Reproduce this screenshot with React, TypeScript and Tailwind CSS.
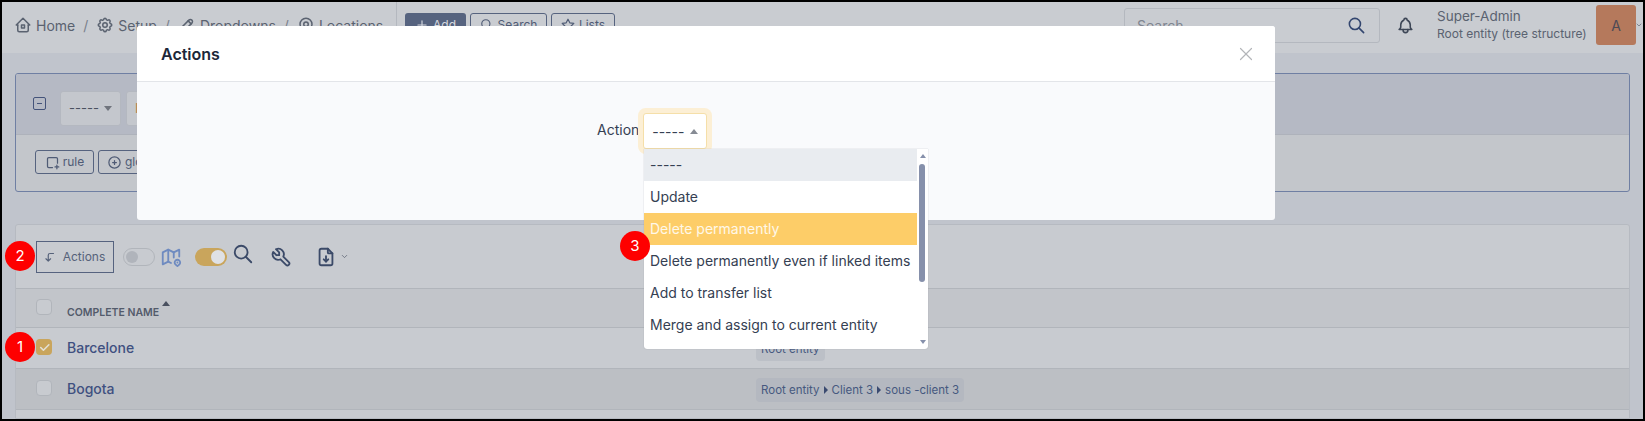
import {
  TbHome2,
  TbSettings,
  TbPencil,
  TbMapPin,
  TbPlus,
  TbSearch,
  TbStar,
  TbBell,
  TbX,
  TbTool,
  TbFileDownload,
  TbMap2,
  TbCornerLeftDown,
  TbCirclePlus,
  TbChevronDown,
  TbCheck,
} from "react-icons/tb";

const crumbs = [
  { icon: TbHome2, label: "Home" },
  { icon: TbSettings, label: "Setup" },
  { icon: TbPencil, label: "Dropdowns" },
  { icon: TbMapPin, label: "Locations" },
];

const options = [
  "-----",
  "Update",
  "Delete permanently",
  "Delete permanently even if linked items",
  "Add to transfer list",
  "Merge and assign to current entity",
];

function Marker({ n, className }: { n: number; className: string }) {
  return (
    <div className={`absolute flex h-[30px] w-[30px] items-center justify-center rounded-full bg-[#fe0000] text-[15px] text-white ${className}`}>
      {n}
    </div>
  );
}

function Header() {
  return (
    <header className="flex h-[51px] shrink-0 items-center bg-[#c9ccd1] text-[#5a6270]">
      <nav className="flex w-[394px] items-center pb-[5px] pl-[12px] text-[14px]">
        {crumbs.map((c, i) => {
          const Icon = c.icon;
          return (
            <div key={c.label} className="flex items-center">
              {i > 0 && <span className="mx-[8px] text-[#7a808b]">/</span>}
              <Icon size={18} className="mr-[4px]" />
              <span>{c.label}</span>
            </div>
          );
        })}
      </nav>
      <div className="h-full w-px bg-[#b4b8bf]" />
      <div className="ml-[8px] flex items-center gap-[4px] pb-[5px] text-[12px]">
        <button className="flex h-[24px] w-[61px] items-center justify-center gap-1 rounded-[3px] bg-[#56637f] text-[#d5d8de]">
          <TbPlus size={14} /> Add
        </button>
        <button className="flex h-[24px] w-[77px] items-center justify-center gap-1 rounded-[3px] border border-[#56637f] text-[#4f5b75]">
          <TbSearch size={14} /> Search
        </button>
        <button className="flex h-[24px] w-[64px] items-center justify-center gap-1 rounded-[3px] border border-[#56637f] text-[#4f5b75]">
          <TbStar size={14} /> Lists
        </button>
      </div>
      <div className="mb-[5px] ml-auto flex items-center">
        <div className="flex h-[35px] w-[256px] items-center justify-between rounded-[3px] border border-[#b4b8bf] pl-[12px] pr-[13px] text-[14px] text-[#7f8590]">
          Search
          <TbSearch size={19} className="text-[#33466f]" />
        </div>
        <TbBell size={19} className="ml-[16px] text-[#3d4656]" />
        <div className="ml-[22px] w-[159px] leading-[17px]">
          <div className="text-[13.5px] text-[#5a6270]">Super-Admin</div>
          <div className="text-[12px] text-[#5a6270]">Root entity (tree structure)</div>
        </div>
        <div className="flex h-[40px] w-[40px] items-center justify-center rounded-[3px] bg-[#b5795c] text-[14px] text-[#4d4a55]">
          A
        </div>
        <TbChevronDown size={8} className="ml-[-1px] w-[8px] text-[#5a6270]" />
      </div>
    </header>
  );
}

function FilterCard() {
  return (
    <section className="mx-[13px] mt-[20px] h-[119px] overflow-hidden rounded-[3px] border border-[#6f7fa3] bg-[#c3c6cb]">
      <div className="flex h-[61px] items-start border-b border-[#aeb2bb] bg-[#b5b9c4] pl-[17px] pt-[17px]">
        <span className="mt-[6px] flex h-[13px] w-[13px] items-center justify-center rounded-[2px] border-[1.5px] border-[#44537a]">
          <span className="h-[1.5px] w-[5px] bg-[#44537a]" />
        </span>
        <div className="ml-[14px] flex h-[35px] w-[61px] items-center justify-center gap-[5px] rounded-[3px] border border-[#b4b8c0] bg-[#c4c7cd] text-[13px] text-[#4a5160]">
          -----
          <span className="h-0 w-0 border-x-[4px] border-t-[5px] border-x-transparent border-t-[#70747d]" />
        </div>
        <div className="ml-[5px] flex h-[35px] w-[100px] items-center rounded-[3px] border border-[#b4b8c0] bg-[#c4c7cd] pl-[8px] text-[13px] text-[#b5814e]">
          Items
        </div>
      </div>
      <div className="flex gap-[4px] pl-[19px] pt-[15px] text-[12px] text-[#4f5b75]">
        <button className="flex h-[24px] w-[59px] items-center justify-center gap-[3px] rounded-[3px] border border-[#56637f]">
          <svg width="15" height="15" viewBox="0 0 24 24" fill="none" stroke="currentColor" strokeWidth="2" strokeLinecap="round">
            <path d="M12 20H6a2 2 0 0 1-2-2V6a2 2 0 0 1 2-2h12a2 2 0 0 1 2 2v7" />
            <path d="M16 19h6M19 16v6" />
          </svg>
          rule
        </button>
        <button className="flex h-[24px] w-[80px] items-center gap-[3px] rounded-[3px] border border-[#56637f] pl-[8px]">
          <TbCirclePlus size={15} /> global
        </button>
      </div>
    </section>
  );
}

function ListCard() {
  return (
    <section className="mx-[13px] mt-[32px] flex-1 rounded-t-[3px] border border-[#b6bac1] bg-[#c8cbd0]">
      <div className="flex h-[64px] items-center border-b border-[#b1b5bb] pl-[20px]">
        <button className="flex h-[32px] w-[78px] items-center justify-center gap-[6px] border border-[#56637f] pr-[2px] text-[12px] text-[#56627a]">
          <TbCornerLeftDown size={14} /> Actions
        </button>
        <div className="ml-[9px] flex h-[18px] w-[32px] items-center rounded-full border border-[#b1b5bb] bg-[#c8cbd0] pl-[2px]">
          <span className="h-[12px] w-[12px] rounded-full bg-[#b0b4bb]" />
        </div>
        <TbMap2 size={22} className="ml-[5px] text-[#6f8bc0]" />
        <div className="ml-[13px] flex h-[18px] w-[32px] items-center justify-end rounded-full bg-[#c9a55c] pr-[2px]">
          <span className="h-[14px] w-[14px] rounded-full bg-[#dfe1e5]" />
        </div>
        <TbSearch size={22} className="ml-[5px] -translate-y-[3px] text-[#3b4a68]" />
        <TbTool size={22} className="ml-[16px] text-[#3b4a68]" />
        <TbFileDownload size={22} className="ml-[23px] text-[#3b4a68]" />
        <TbChevronDown size={9} className="ml-[3px] text-[#5a6270]" />
      </div>
      <div className="flex h-[39px] border-b border-[#b1b5bb] bg-[#c2c5ca] pl-[20px]">
        <span className="mt-[10px] h-[16px] w-[16px] rounded-[4px] border border-[#b1b5bb] bg-[#c8cbd0]" />
        <span className="ml-[15px] mt-[16px] text-[10.5px] font-semibold text-[#535b6b]">COMPLETE NAME</span>
        <span className="ml-[3px] mt-[12px] h-0 w-0 border-x-[4px] border-b-[5px] border-x-transparent border-b-[#4a5160]" />
      </div>
      <div className="flex h-[41px] items-center border-b border-[#b1b5bb] pb-[2px] pl-[20px]">
        <span className="flex h-[16px] w-[16px] items-center justify-center rounded-[4px] bg-[#c9a55c] text-[#e3e0d5]">
          <TbCheck size={13} strokeWidth={3} />
        </span>
        <span className="ml-[15px] w-[689px] text-[14px] font-medium text-[#3f5080]">Barcelone</span>
        <span className="mt-[3px] rounded-[4px] bg-[#bcc0c7] px-[5px] py-[4px] text-[11.5px] leading-[16px] text-[#46587f]">Root entity</span>
      </div>
      <div className="flex h-[41px] items-center border-b border-[#b1b5bb] bg-[#bcbfc4] pb-[2px] pl-[20px]">
        <span className="h-[16px] w-[16px] rounded-[4px] border border-[#b1b5bb] bg-[#c8cbd0]" />
        <span className="ml-[15px] w-[689px] text-[14px] font-medium text-[#3f5080]">Bogota</span>
        <span className="mt-[3px] flex items-center gap-[4px] rounded-[4px] bg-[#b4b8c0] px-[5px] py-[4px] text-[11.5px] leading-[16px] text-[#46587f]">
          Root entity
          <span className="h-0 w-0 border-y-[4px] border-l-[4px] border-y-transparent border-l-[#3a4a70]" />
          Client 3
          <span className="h-0 w-0 border-y-[4px] border-l-[4px] border-y-transparent border-l-[#3a4a70]" />
          sous -client 3
        </span>
      </div>
    </section>
  );
}

function ActionsModal() {
  return (
    <div className="absolute left-[135px] top-[24px] h-[194px] w-[1138px] rounded-[3px] bg-[#f9fafc]">
      <div className="flex h-[56px] items-center justify-between rounded-t-[3px] border-b border-[#e3e5e9] bg-white pl-[24px] pr-[18px]">
        <h2 className="text-[16px] font-semibold text-[#1c2739]">Actions</h2>
        <TbX size={22} strokeWidth={1.3} className="text-[#b3b5b9]" />
      </div>
      <div className="flex pl-[460px] pt-[31px]">
        <span className="mr-[4px] pt-[6px] text-[14px] text-[#354052]">Action</span>
        <div className="flex h-[36px] w-[64px] items-center justify-center gap-[6px] rounded-[3px] border border-[#f5dfa9] bg-white text-[14px] text-[#354052] shadow-[0_0_0_5px_#fcefd5]">
          -----
          <span className="h-0 w-0 border-x-[4px] border-b-[5px] border-x-transparent border-b-[#868b94]" />
        </div>
      </div>
    </div>
  );
}

function OptionList() {
  return (
    <div className="absolute left-[642px] top-[147px] flex h-[200px] w-[284px] rounded-b-[3px] bg-white text-[14px] text-[#354052] shadow-[0_0_1px_#8a8f98]">
      <ul className="w-[273px]">
        {options.map((o, i) => (
          <li
            key={o}
            className={`flex h-[32px] items-center whitespace-nowrap pb-[1px] pl-[6px] ${
              i === 0 ? "bg-[#e9ecf0]" : i === 2 ? "bg-[#fdcd68] text-[#fff8e8]" : ""
            }`}
          >
            {o}
          </li>
        ))}
      </ul>
      <div className="relative flex-1">
        <span className="absolute left-[3px] top-[5px] h-0 w-0 border-x-[3px] border-b-[4px] border-x-transparent border-b-[#8690ab]" />
        <span className="absolute left-[2px] top-[15px] h-[118px] w-[6px] rounded-full bg-[#8690ab]" />
        <span className="absolute bottom-[5px] left-[3px] h-0 w-0 border-x-[3px] border-t-[4px] border-x-transparent border-t-[#8690ab]" />
      </div>
    </div>
  );
}

export default function App() {
  return (
    <div
      className="relative h-[421px] w-[1645px] overflow-hidden border-2 border-black bg-[#c0c4cc]"
      style={{ fontFamily: "Inter, sans-serif" }}
    >
      <div className="flex h-full flex-col overflow-hidden">
        <Header />
        <FilterCard />
        <ListCard />
      </div>
      <ActionsModal />
      <OptionList />
      <Marker n={1} className="left-[3px] top-[330px]" />
      <Marker n={2} className="left-[3px] top-[239px]" />
      <Marker n={3} className="left-[618px] top-[229px]" />
    </div>
  );
}
